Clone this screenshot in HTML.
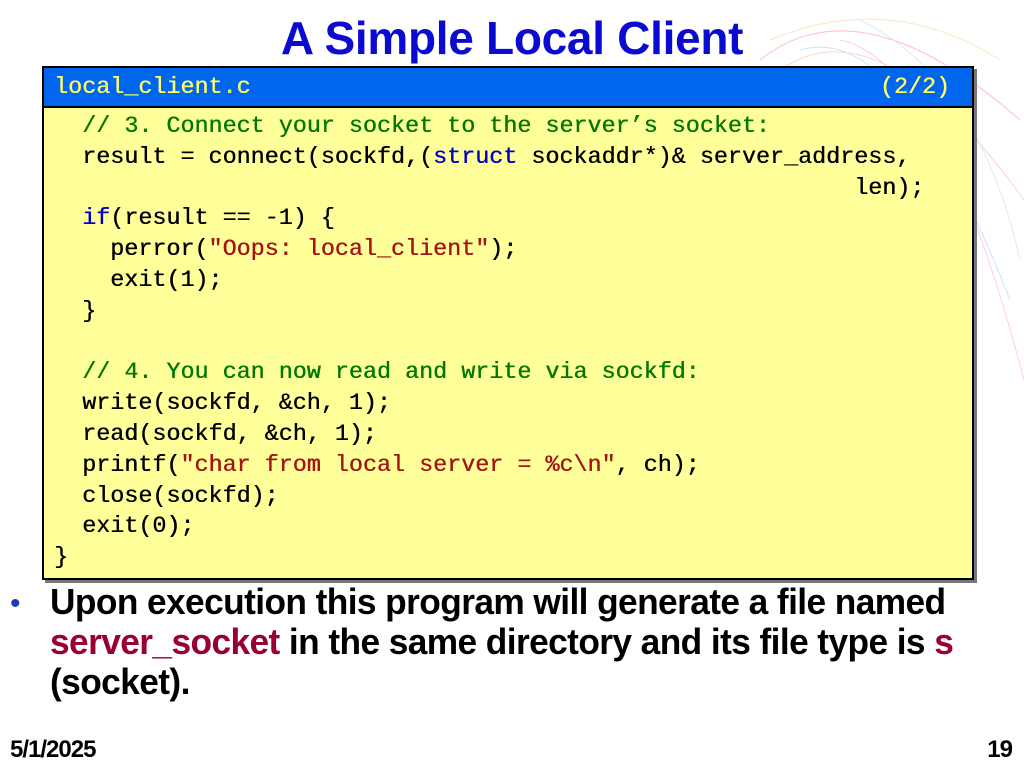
<!DOCTYPE html>
<html><head><meta charset="utf-8"><style>
body{margin:0;width:1024px;height:768px;background:#fff;position:relative;overflow:hidden;font-family:"Liberation Sans",sans-serif}
.title{position:absolute;left:0;width:1024px;top:13px;text-align:center;font-weight:bold;font-size:46px;color:#0a0ad0;letter-spacing:-0.3px;line-height:50px}
.box{position:absolute;left:42px;top:66px;width:928px;height:510px;border:2px solid #000;background:#ffff99;box-shadow:3px 3px 0 #777}
.hdr{height:38px;background:#0066ee;border-bottom:2px solid #000;color:#ffff66;font-family:"Liberation Mono",monospace;font-size:23.4px;line-height:40px;padding:0 22px 0 10px;display:flex;justify-content:space-between;text-shadow:0.4px 0 0 currentColor}
pre{margin:0;padding:0 0 0 10px;font-family:"Liberation Mono",monospace;font-size:23.4px;line-height:30.8px;color:#000;position:absolute;top:44px;text-shadow:0.4px 0 0 currentColor}
.c{color:#007700}.k{color:#0000cc}.s{color:#a31515}
.bul{position:absolute;left:50px;top:582px;font-weight:bold;font-size:36px;line-height:40px;color:#000;white-space:nowrap;letter-spacing:-0.6px;transform-origin:0 0;transform:scaleX(0.98)}
.dot{position:absolute;left:10px;top:584px;color:#1d3bb5;font-size:30px;line-height:39px}
.r{color:#990033}
.f{position:absolute;top:736px;font-weight:bold;font-size:24px;letter-spacing:-1px}
</style></head><body>
<svg style="position:absolute;left:740px;top:0" width="284" height="400" viewBox="0 0 284 400">
<g fill="none" stroke-width="1" opacity="0.5">
<path d="M20 60 Q120 -20 280 120" stroke="#f7a"/><path d="M40 70 Q140 0 284 200" stroke="#fa8"/>
<path d="M60 50 Q160 20 270 300" stroke="#8cf"/><path d="M100 40 Q200 60 284 380" stroke="#f9c"/>
<path d="M30 40 Q150 -10 260 60" stroke="#fc8"/><path d="M120 20 Q240 80 280 260" stroke="#adf"/>
</g></svg>
<div class="title">A Simple Local Client</div>
<div class="box">
<div class="hdr"><span>local_client.c</span><span>(2/2)</span></div>
<pre>  <span class="c">// 3. Connect your socket to the server’s socket:</span>
  result = connect(sockfd,(<span class="k">struct</span> sockaddr*)&amp; server_address,
                                                         len);
  <span class="k">if</span>(result == -1) {
    perror(<span class="s">"Oops: local_client"</span>);
    exit(1);
  }

  <span class="c">// 4. You can now read and write via sockfd:</span>
  write(sockfd, &amp;ch, 1);
  read(sockfd, &amp;ch, 1);
  printf(<span class="s">"char from local server = %c\n"</span>, ch);
  close(sockfd);
  exit(0);
}</pre>
</div>
<div class="dot">•</div>
<div class="bul">Upon execution this program will generate a file named<br><span class="r">server_socket</span> in the same directory and its file type is <span class="r">s</span><br>(socket).</div>
<div class="f" style="left:10px">5/1/2025</div>
<div class="f" style="right:12px">19</div>
</body></html>
